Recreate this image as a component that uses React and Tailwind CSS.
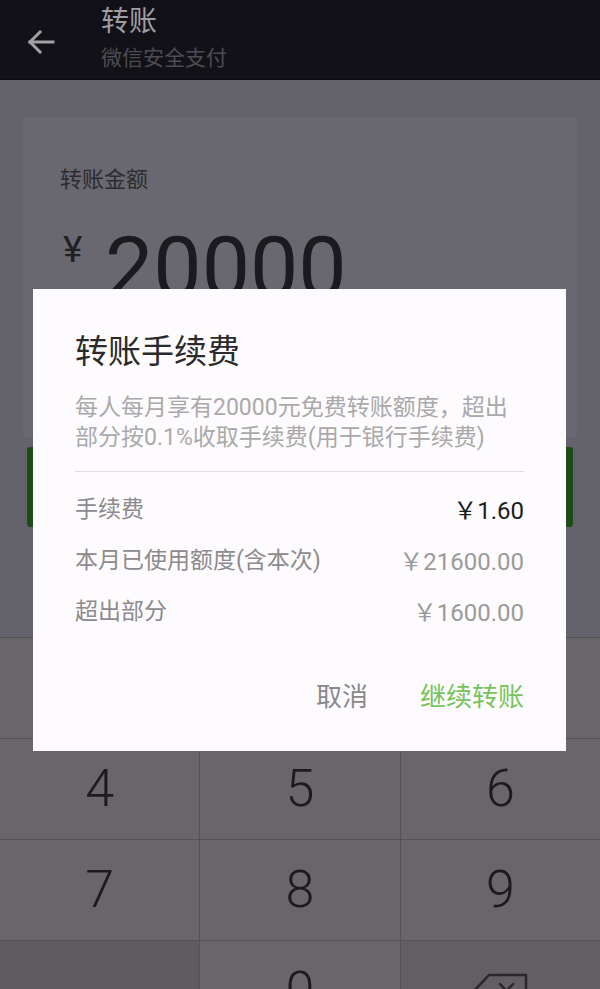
const font = { fontFamily: 'Roboto, "Noto Sans CJK SC", sans-serif' };

const BackArrow = () => (
  <svg width="28" height="26" viewBox="0 0 28 26" fill="none" stroke="#a3a1a6" strokeWidth="3" strokeLinecap="square">
    <path d="M3 13 H26" />
    <path d="M13 3 L3 13 L13 23" />
  </svg>
);

const DeleteKey = () => (
  <svg width="58" height="38" viewBox="0 0 58 38" fill="none" stroke="#2a272b" strokeWidth="2.5" strokeLinejoin="round">
    <path d="M18 3 H55 V35 H18 L3 19 Z" />
    <path d="M29 12 L42 26 M42 12 L29 26" strokeLinecap="round" />
  </svg>
);

// keys of the first row sit under the dialog, so they are drawn without labels
const Key = ({ label, tone = "bg-[#6a656a]", children }) => (
  <div className={`flex items-center justify-center h-[100px] ${tone}`}>
    {label && <span className="text-[52px] font-light text-[#1c1a1e] leading-none">{label}</span>}
    {children}
  </div>
);

const Row = ({ label, value, strong }) => (
  <div className="flex items-center justify-between h-[51px]">
    <span className="text-[23px] text-[#8c8a8c]">{label}</span>
    <span className={`text-[24px] ${strong ? "text-[#1b1b1b]" : "text-[#9b9a9b]"}`}>{value}</span>
  </div>
);

export default function App() {
  return (
    <div className="relative w-[600px] h-[989px] overflow-hidden bg-[#64626a] flex flex-col" style={font}>
      {/* header */}
      <header className="h-[80px] shrink-0 bg-[#131118] flex items-center border-b border-[#0b0a0e]">
        <div className="w-[101px] pl-[27px] pt-[4px]">
          <BackArrow />
        </div>
        <div className="flex flex-col">
          <span className="text-[28px] leading-[34px] text-[#a09ea3] -mt-[2px]">转账</span>
          <span className="text-[21px] leading-[28px] text-[#4e4c52] mt-[5px]">微信安全支付</span>
        </div>
      </header>

      {/* amount card */}
      <div className="px-[23px] pt-[37px] shrink-0">
        <div className="h-[320px] bg-[#69676f] pl-[37px] pt-[48px]">
          <div className="text-[22px] leading-[30px] text-[#2c2b31]">转账金额</div>
          <div className="flex items-start mt-[36px]">
            <span className="text-[37px] leading-none text-[#201f24] w-[45px] pl-[3px]">¥</span>
            <span className="text-[86px] leading-none text-[#1b1a1f] -mt-[6px]">20000</span>
          </div>
        </div>
        <div className="mt-[10px] mx-[4px] h-[80px] rounded-[3px] bg-[#1e4c18]" />
      </div>

      {/* keypad */}
      <div className="mt-[110px] shrink-0 grid grid-cols-3 gap-px bg-[#555256] pt-px">
        <Key />
        <Key />
        <Key />
        <Key label="4" />
        <Key label="5" />
        <Key label="6" />
        <Key label="7" />
        <Key label="8" />
        <Key label="9" />
        <Key tone="bg-[#5f5c60]" />
        <Key label="0" />
        <Key tone="bg-[#625f63]">
          <DeleteKey />
        </Key>
      </div>

      {/* fee dialog */}
      <div className="absolute left-[33px] top-[289px] w-[533px] h-[462px] bg-[#fdfbfd] px-[42px] pt-[43px]">
        <div className="text-[33px] leading-[40px] text-[#2a2a2a]">转账手续费</div>
        <p className="mt-[21px] text-[23px] leading-[30px] text-[#aaa9aa]">
          每人每月享有20000元免费转账额度，超出部分按0.1%收取手续费(用于银行手续费)
        </p>
        <div className="mt-[18px] h-px bg-[#dedcde]" />
        <div className="mt-[13px]">
          <Row label="手续费" value="￥1.60" strong />
          <Row label="本月已使用额度(含本次)" value="￥21600.00" />
          <Row label="超出部分" value="￥1600.00" />
        </div>
        <div className="mt-[34px] h-[50px] flex items-center justify-end gap-[52px]">
          <span className="text-[26px] text-[#8a888a]">取消</span>
          <span className="text-[26px] text-[#77c35a]">继续转账</span>
        </div>
      </div>
    </div>
  );
}
